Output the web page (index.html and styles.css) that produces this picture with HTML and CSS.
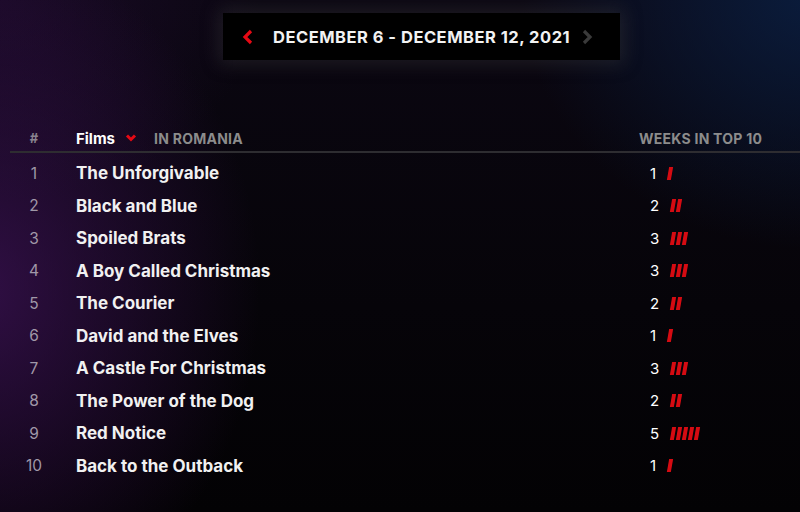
FILE: index.html
```html
<!DOCTYPE html>
<html>
  <head>
    <title>Top 10 Films</title>
    <link rel="stylesheet" href="styles.css">
  </head>
  <body>
    <div class="page">
      <div class="week-nav">
        <div class="week-box">
          <svg class="chev chev-left" width="12" height="16" viewBox="0 0 12 16">
            <path d="M9 2 L3 8 L9 14" fill="none" stroke="#e50914" stroke-width="3.2"/>
          </svg>
          <span class="week-label">DECEMBER 6 - DECEMBER 12, 2021</span>
          <svg class="chev chev-right" width="12" height="16" viewBox="0 0 12 16">
            <path d="M3 2 L9 8 L3 14" fill="none" stroke="#3a3a3a" stroke-width="3.2"/>
          </svg>
        </div>
      </div>

      <div class="table">
        <div class="head-row">
          <div class="rank">#</div>
          <div class="title-head">
            <span class="films">Films</span>
            <svg class="down" width="12" height="10" viewBox="0 0 12 10">
              <path d="M2 2.5 L6 6.5 L10 2.5" fill="none" stroke="#e50914" stroke-width="3"/>
            </svg>
            <span class="country">IN ROMANIA</span>
          </div>
          <div class="weeks-head">WEEKS IN TOP 10</div>
        </div>

        <div class="rows">
          <div class="row"><div class="rank">1</div><div class="title">The Unforgivable</div><div class="weeks">1 <span class="bars"><i></i></span></div></div>
          <div class="row"><div class="rank">2</div><div class="title">Black and Blue</div><div class="weeks">2 <span class="bars"><i></i><i></i></span></div></div>
          <div class="row"><div class="rank">3</div><div class="title">Spoiled Brats</div><div class="weeks">3 <span class="bars"><i></i><i></i><i></i></span></div></div>
          <div class="row"><div class="rank">4</div><div class="title">A Boy Called Christmas</div><div class="weeks">3 <span class="bars"><i></i><i></i><i></i></span></div></div>
          <div class="row"><div class="rank">5</div><div class="title">The Courier</div><div class="weeks">2 <span class="bars"><i></i><i></i></span></div></div>
          <div class="row"><div class="rank">6</div><div class="title">David and the Elves</div><div class="weeks">1 <span class="bars"><i></i></span></div></div>
          <div class="row"><div class="rank">7</div><div class="title">A Castle For Christmas</div><div class="weeks">3 <span class="bars"><i></i><i></i><i></i></span></div></div>
          <div class="row"><div class="rank">8</div><div class="title">The Power of the Dog</div><div class="weeks">2 <span class="bars"><i></i><i></i></span></div></div>
          <div class="row"><div class="rank">9</div><div class="title">Red Notice</div><div class="weeks">5 <span class="bars"><i></i><i></i><i></i><i></i><i></i></span></div></div>
          <div class="row"><div class="rank">10</div><div class="title">Back to the Outback</div><div class="weeks">1 <span class="bars"><i></i></span></div></div>
        </div>
      </div>
    </div>
  </body>
</html>
```

FILE: styles.css
```css
html, body {
  margin: 0;
  height: 100%;
}

body {
  font-family: Inter, "Liberation Sans", sans-serif;
  color: #fff;
  background-color: #050307;
  background-image:
    radial-gradient(ellipse 280px 340px at -20px 290px, rgba(62, 18, 88, 0.75), rgba(40, 10, 60, 0) 100%),
    radial-gradient(ellipse 300px 260px at 820px -10px, rgba(10, 34, 72, 0.8), rgba(5, 20, 45, 0) 100%),
    radial-gradient(ellipse 260px 200px at 0 0, rgba(36, 12, 52, 0.6), rgba(36, 12, 52, 0) 100%),
    linear-gradient(180deg, #0b0712 0%, #060409 60%, #030204 100%);
  overflow: hidden;
}

.page {
  width: 800px;
  height: 512px;
}

/* week selector */
.week-nav {
  display: flex;
  padding-top: 13px;
  padding-left: 223px;
}

.week-box {
  display: flex;
  align-items: center;
  width: 397px;
  height: 47px;
  box-sizing: border-box;
  padding-left: 19px;
  background: #000;
  box-shadow: 0 0 18px 4px rgba(70, 70, 70, 0.35);
}

.chev-left {
  margin-right: 19px;
}

.week-label {
  font-size: 16.5px;
  font-weight: 700;
  letter-spacing: 0.5px;
  color: #f2f2f2;
}

.chev-right {
  margin-left: 11px;
}

/* table */
.table {
  margin-top: 65px;
  padding-left: 10px;
}

.head-row {
  display: flex;
  align-items: center;
  height: 26px;
  border-bottom: 2px solid #2e2d31;
}

.rank {
  width: 48px;
  text-align: center;
  color: #a098a8;
  font-size: 15.5px;
}

.head-row .rank {
  font-size: 13px;
  font-weight: 700;
  color: #8a8490;
}

.title-head {
  display: flex;
  align-items: center;
  margin-left: 18px;
  flex: 1;
}

.films {
  font-size: 15px;
  font-weight: 700;
  color: #fff;
}

.down {
  margin-left: 10px;
  margin-right: 17px;
}

.country,
.weeks-head {
  font-size: 14px;
  font-weight: 700;
  letter-spacing: 0.25px;
  color: #8c8c8c;
}

.weeks-head {
  width: 161px;
}

.rows {
  margin-top: 4px;
}

.row {
  display: flex;
  align-items: center;
  height: 32.5px;
}

.title {
  flex: 1;
  margin-left: 18px;
  font-size: 17px;
  font-weight: 700;
  color: #f1f1f1;
}

.weeks {
  display: flex;
  align-items: center;
  width: 150px;
  padding-left: 11px;
  font-size: 15px;
  color: #fff;
}

.bars {
  display: flex;
  gap: 2px;
  margin-left: 12px;
}

.bars i {
  display: block;
  width: 4px;
  height: 13px;
  background: #d50b12;
  transform: skewX(-10deg);
}
```
